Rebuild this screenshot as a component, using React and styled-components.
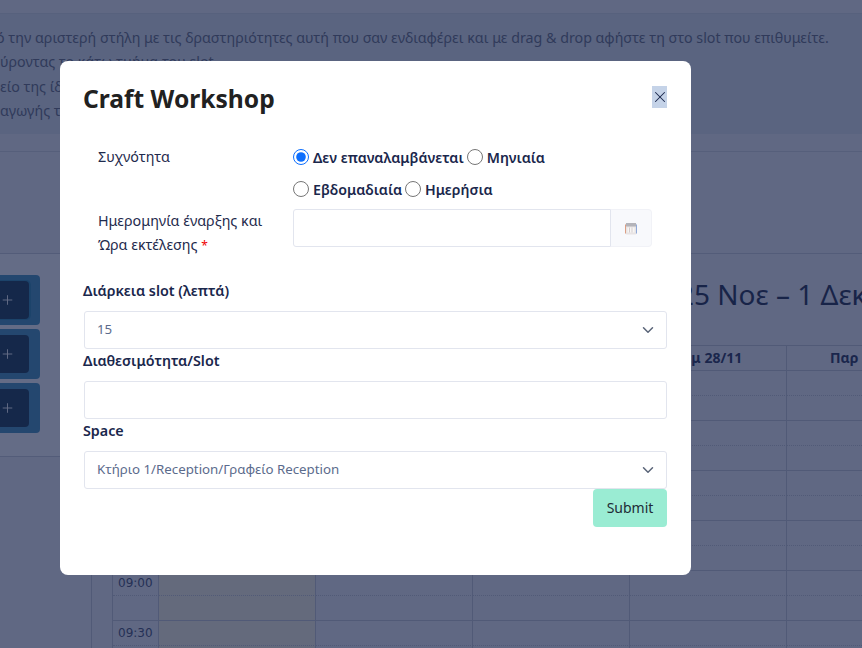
import React from 'react'
import styled, { createGlobalStyle } from 'styled-components'
import { ChevronDown, Plus, X } from 'lucide-react'

const GlobalStyle = createGlobalStyle`
  html, body {
    margin: 0;
    height: 100%;
    overflow: hidden;
    background: #f1f2f5;
    font-family: 'Noto Sans', 'Liberation Sans', sans-serif;
    color: #1a274c;
  }
  * { box-sizing: border-box; }
`

const Page = styled.div`
  width: 862px;
  height: 648px;
  overflow: hidden;
`

const Notice = styled.div`
  margin-top: 13px;
  height: 121px;
  padding-top: 12px;
  background: #dfe6eb;
  border-top: 1px solid #d6dbe2;
  font-size: 14.25px;
  line-height: 24.4px;
  color: #5d6578;
  white-space: nowrap;
`

const NoticeLine = styled.p`
  margin: 0 0 0 ${(p) => p.$shift || 0}px;
`

const Rule = styled.div`
  height: 103px;
  margin-top: 17px;
  border-top: 1px solid #d3d6de;
  border-bottom: 1px solid #c9cdd7;
`

const Main = styled.div`
  display: flex;
  align-items: flex-start;
`

const Sidebar = styled.div`
  width: 91px;
  height: 203px;
  flex-shrink: 0;
  padding: 21px 0 0;
  background: #fff;
  border-bottom: 1px solid #c9cdd7;
  display: flex;
  flex-direction: column;
  gap: 4px;
`

const Activity = styled.div`
  width: 40px;
  height: 50px;
  padding: 6px 11px 6px 0;
  background: #398bb9;
  border-radius: 0 4px 4px 0;
`

const AddButton = styled.div`
  height: 38px;
  display: flex;
  align-items: center;
  justify-content: flex-end;
  padding-right: 14px;
  background: #0a2e46;
  border-radius: 0 4px 4px 0;
  box-shadow: ${(p) => (p.$focused ? '1px 0 0 1px #1f7fa8' : 'none')};
  color: #fff;
`

const Calendar = styled.div`
  flex-shrink: 0;
  padding-left: 20px;
  border-left: 1px solid #c3c6cf;
  min-height: 400px;
`

const CalendarTitle = styled.h2`
  margin: 0;
  height: 91px;
  padding: 21px 0 0 ${(p) => p.$indent}px;
  font-size: 28px;
  line-height: 38px;
  font-weight: 400;
  color: #14203f;
  white-space: nowrap;
`

const Grid = styled.div`
  display: grid;
  grid-template-columns: 46px repeat(5, 157px);
  grid-auto-rows: 25px;
  border-top: 1px solid #c3c6cf;
  border-left: 1px solid #c3c6cf;
`

const HeadCell = styled.div`
  font-size: 14px;
  font-weight: 700;
  line-height: 24px;
  text-align: center;
  white-space: nowrap;
  color: #1a274c;
  border-right: 1px solid #c3c6cf;
  border-bottom: 1px solid #c3c6cf;
`

const Cell = styled.div`
  padding-left: 5px;
  font-family: 'DejaVu Sans', sans-serif;
  font-size: 12px;
  line-height: 25px;
  color: #3a4568;
  background: ${(p) => (p.$today ? '#fff8e0' : 'transparent')};
  border-right: 1px solid #c3c6cf;
  border-bottom: 1px ${(p) => (p.$half ? 'dotted' : 'solid')} #c3c6cf;
`

const Overlay = styled.div`
  position: fixed;
  inset: 0;
  padding: 61px 0 0 60px;
  background: rgba(26, 39, 76, 0.68);
`

const Modal = styled.div`
  width: 631px;
  height: 514px;
  padding: 0 24px;
  background: #fff;
  border-radius: 8px;
`

const ModalHeader = styled.div`
  height: 80px;
  display: flex;
  justify-content: space-between;
  align-items: flex-start;
`

const ModalTitle = styled.h1`
  margin: 20px 0 0 -1px;
  font-size: 24.6px;
  line-height: 36px;
  font-weight: 700;
  color: #212121;
`

const CloseButton = styled.button`
  width: 15px;
  height: 22px;
  margin-top: 25px;
  padding: 0;
  border: 0;
  display: flex;
  align-items: center;
  justify-content: center;
  background: #c5d3e8;
  color: #1a274c;

  svg {
    flex-shrink: 0;
  }
`

const FormRow = styled.div`
  display: grid;
  grid-template-columns: 209px 359px;
  height: ${(p) => p.$height}px;
`

const RowLabel = styled.div`
  padding: ${(p) => p.$top || 0}px 20px 0 14px;
  font-size: 14.3px;
  line-height: ${(p) => p.$line}px;
  color: #1f2b4d;

  span {
    font-size: 12px;
    color: #f00000;
  }
`

const RadioLine = styled.div`
  display: flex;
  align-items: center;
  height: 32px;
  gap: 3px;
`

const RadioLabel = styled.label`
  display: flex;
  align-items: center;
  gap: 4px;
  font-size: 14.2px;
  font-weight: 600;
  color: #1a274c;
  white-space: nowrap;
`

const Radio = styled.input`
  width: 16px;
  height: 16px;
  margin: 0;
  accent-color: #0d6efd;
`

const DateGroup = styled.div`
  display: flex;
  height: 38px;
  margin-top: 4px;
`

const TextInput = styled.input`
  flex: 1;
  display: block;
  width: 100%;
  height: 38px;
  padding: 0 12px;
  background: #fff;
  border: 1px solid #e2e5ee;
  border-radius: ${(p) => (p.$joined ? '3px 0 0 3px' : '3px')};
  outline: none;
`

const DateAddon = styled.div`
  width: 41px;
  display: flex;
  align-items: center;
  justify-content: center;
  background: #f8f9fc;
  border: 1px solid #f1f2f7;
  border-left: 0;
  border-radius: 0 4px 4px 0;
`

const FieldLabel = styled.label`
  display: block;
  margin: 0 0 8px -1px;
  font-size: 14.3px;
  line-height: 24px;
  font-weight: 600;
  color: #1a274c;
`

const SelectWrap = styled.div`
  position: relative;
  color: #5a6478;

  svg {
    position: absolute;
    top: 10px;
    right: 10px;
    pointer-events: none;
  }
`

const Select = styled.select`
  display: block;
  width: 100%;
  height: 38px;
  padding: 0 12px 2px;
  appearance: none;
  background: #fff;
  border: 1px solid #e2e5ee;
  border-radius: 3px;
  font-family: inherit;
  font-size: 13.3px;
  color: #5b6b8c;
  outline: none;
`

const Actions = styled.div`
  display: flex;
  justify-content: flex-end;
`

const SubmitButton = styled.button`
  width: 74px;
  height: 38px;
  padding: 0 0 2px;
  background: #9aecd3;
  border: 0;
  border-radius: 4px;
  font-family: inherit;
  font-size: 14px;
  color: #212b36;
`

const CalendarIcon = () => (
  <svg width='12' height='13' viewBox='0 0 12 13'>
    <rect x='0.5' y='1' width='11' height='11.5' rx='1.5' fill='#e8e4e4' />
    <path d='M0.5 2.5v9' stroke='#dc9f84' />
    <path d='M11.5 2.5v9' stroke='#8fa9d8' />
    <rect x='1' y='1' width='10' height='3.5' fill='#b4b4ba' />
    <rect x='2.5' y='5.5' width='7' height='5' fill='#f8f6f4' />
    <path d='M4.5 5.5v5M7 5.5v5' stroke='#d3cdd0' />
  </svg>
)

const DAYS = ['Δευ 25/11', 'Τρι 26/11', 'Τετ 27/11', 'Πέμ 28/11', 'Παρ 29/11']
const TIMES = ['07:00', '07:30', '08:00', '08:30', '09:00', '09:30']

const App = () => {
  return (
    <>
      <GlobalStyle />
      <Page>
        <Notice>
          <NoticeLine $shift={-4}>ό την αριστερή στήλη με τις δραστηριότητες αυτή που σαν ενδιαφέρει και με drag &amp; drop αφήστε τη στο slot που επιθυμείτε.</NoticeLine>
          <NoticeLine>ύροντας το κάτω τμήμα του slot.</NoticeLine>
          <NoticeLine>είο της ίδιας ημέρας.</NoticeLine>
          <NoticeLine>αγωγής της δραστηριότητας.</NoticeLine>
        </Notice>
        <Rule />
        <Main>
          <Sidebar>
            {[0, 1, 2].map((i) => (
              <Activity key={i}>
                <AddButton $focused={i === 0}>
                  <Plus size={16} strokeWidth={1.5} />
                </AddButton>
              </Activity>
            ))}
          </Sidebar>
          <Calendar>
            <CalendarTitle $indent={566}>25 Νοε – 1 Δεκ 2024</CalendarTitle>
            <Grid>
              <HeadCell />
              {DAYS.map((d) => (
                <HeadCell key={d}>{d}</HeadCell>
              ))}
              {TIMES.map((t) => (
                <React.Fragment key={t}>
                  <Cell $half>{t}</Cell>
                  {DAYS.map((d, i) => (
                    <Cell key={d} $half $today={i === 0} />
                  ))}
                  <Cell />
                  {DAYS.map((d, i) => (
                    <Cell key={d} $today={i === 0} />
                  ))}
                </React.Fragment>
              ))}
            </Grid>
          </Calendar>
        </Main>
      </Page>

      <Overlay>
        <Modal>
          <ModalHeader>
            <ModalTitle>Craft Workshop</ModalTitle>
            <CloseButton aria-label='Close'>
              <X size={18} strokeWidth={1.4} />
            </CloseButton>
          </ModalHeader>

          <form>
            <FormRow $height={64}>
              <RowLabel $line={32}>Συχνότητα</RowLabel>
              <div>
                <RadioLine>
                  <RadioLabel>
                    <Radio type='radio' name='freq' defaultChecked />
                    Δεν επαναλαμβάνεται
                  </RadioLabel>
                  <RadioLabel>
                    <Radio type='radio' name='freq' />
                    Μηνιαία
                  </RadioLabel>
                </RadioLine>
                <RadioLine>
                  <RadioLabel>
                    <Radio type='radio' name='freq' />
                    Εβδομαδιαία
                  </RadioLabel>
                  <RadioLabel>
                    <Radio type='radio' name='freq' />
                    Ημερήσια
                  </RadioLabel>
                </RadioLine>
              </div>
            </FormRow>

            <FormRow $height={74}>
              <RowLabel $line={24} $top={4}>
                Ημερομηνία έναρξης και Ώρα εκτέλεσης <span>*</span>
              </RowLabel>
              <DateGroup>
                <TextInput $joined />
                <DateAddon>
                  <CalendarIcon />
                </DateAddon>
              </DateGroup>
            </FormRow>

            <FieldLabel>Διάρκεια slot (λεπτά)</FieldLabel>
            <SelectWrap>
              <Select defaultValue='15'>
                <option>15</option>
                <option>30</option>
              </Select>
              <ChevronDown size={18} strokeWidth={2} />
            </SelectWrap>

            <FieldLabel>Διαθεσιμότητα/Slot</FieldLabel>
            <TextInput />

            <FieldLabel>Space</FieldLabel>
            <SelectWrap>
              <Select>
                <option>Κτήριο 1/Reception/Γραφείο Reception</option>
              </Select>
              <ChevronDown size={18} strokeWidth={2} />
            </SelectWrap>

            <Actions>
              <SubmitButton type='button'>Submit</SubmitButton>
            </Actions>
          </form>
        </Modal>
      </Overlay>
    </>
  )
}

export default App
